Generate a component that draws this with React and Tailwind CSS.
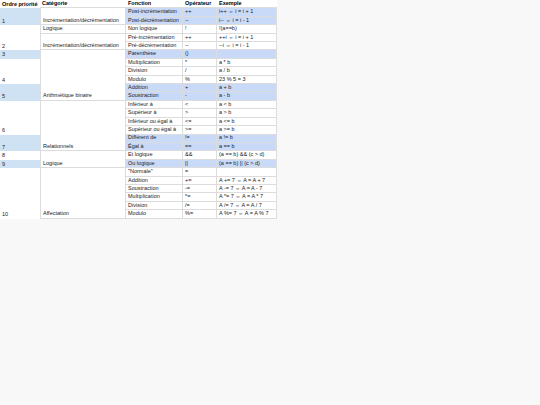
import React from "react";

// one entry per body row: [fonction, operateur, exemple, highlighted]
const rows = [
    ["Post-incrémentation", "++", "i++ ⇔ i = i + 1", true],
    ["Post-décrémentation", "--", "i-- ⇔ i = i - 1", true],
    ["Non logique", "!", "!(a==b)", false],
    ["Pré-incrémentation", "++", "++i ⇔ i = i + 1", false],
    ["Pré-décrémentation", "--", "--i ⇔ i = i - 1", false],
    ["Parenthèse", "()", "", true],
    ["Multiplication", "*", "a * b", false],
    ["Division", "/", "a / b", false],
    ["Modulo", "%", "23 % 5 = 3", false],
    ["Addition", "+", "a + b", true],
    ["Soustraction", "-", "a - b", true],
    ["Inférieur à", "<", "a < b", false],
    ["Supérieur à", ">", "a > b", false],
    ["Inférieur ou égal à", "<=", "a <= b", false],
    ["Supérieur ou égal à", ">=", "a >= b", false],
    ["Différent de", "!=", "a != b", true],
    ["Égal à", "==", "a == b", true],
    ["Et logique", "&&", "(a == b) && (c > d)", false],
    ["Ou logique", "||", "(a == b) || (c > d)", true],
    ['"Normale"', "=", "", false],
    ["Addition", "+=", "A += 7 ⇔ A = A + 7", false],
    ["Soustraction", "-=", "A -= 7 ⇔ A = A - 7", false],
    ["Multiplication", "*=", "A *= 7 ⇔ A = A * 7", false],
    ["Division", "/=", "A /= 7 ⇔ A = A / 7", false],
    ["Modulo", "%=", "A %= 7 ⇔ A = A % 7", false],
];

// row index -> [label, span, blue]
const priorities = {
    0: ["1", "row-span-2", true],
    2: ["2", "row-span-3", false],
    5: ["3", "row-span-1", true],
    6: ["4", "row-span-3", false],
    9: ["5", "row-span-2", true],
    11: ["6", "row-span-4", false],
    15: ["7", "row-span-2", true],
    17: ["8", "row-span-1", false],
    18: ["9", "row-span-1", true],
    19: ["10", "row-span-6", false],
};

const categories = {
    0: ["Incrémentation/décrémentation", "row-span-2"],
    2: ["Logique", "row-span-1"],
    3: ["Incrémentation/décrémentation", "row-span-2"],
    5: ["Arithmétique binaire", "row-span-6"],
    11: ["Relationnels", "row-span-6"],
    17: ["Logique", "row-span-2"],
    19: ["Affectation", "row-span-6"],
};

const cell = "flex items-end px-[2px] whitespace-nowrap overflow-hidden";
const line = "border-[#dcdcdc]";

const App = () => {
    return (
        <div className="min-h-[405px] w-full bg-[#f7f8f7]" style={{ fontFamily: '"Liberation Sans", Arial, sans-serif' }}>
            <div className="grid grid-cols-[40px_86px_57px_34px_60px] grid-rows-[repeat(26,8.42px)] w-[277px] bg-white text-[5.5px] leading-[8.42px] text-[#222]">
                <div className={`${cell} font-bold text-black`}>Ordre priorité</div>
                <div className={`${cell} font-bold text-black border-b ${line}`}>Catégorie</div>
                <div className={`${cell} font-bold text-black border-b ${line}`}>Fonction</div>
                <div className={`${cell} font-bold text-black border-b ${line}`}>Opérateur</div>
                <div className={`${cell} font-bold text-black border-b ${line}`}>Exemple</div>

                {rows.map((row, i) => {
                    const prio = priorities[i];
                    const cat = categories[i];
                    const bg = row[3] ? "bg-[#c9daf8]" : "bg-white";
                    return (
                        <React.Fragment key={i}>
                            {prio && (
                                <div className={`${cell} ${prio[1]} ${prio[2] ? "bg-[#cfe2f3]" : "bg-white"}`}>
                                    {prio[0]}
                                </div>
                            )}
                            {cat && (
                                <div className={`${cell} ${cat[1]} border-l border-r border-b ${line}`}>
                                    {cat[0]}
                                </div>
                            )}
                            <div className={`${cell} ${bg} border-r border-b ${line}`}>{row[0]}</div>
                            <div className={`${cell} ${bg} border-r border-b ${line}`}>{row[1]}</div>
                            <div className={`${cell} ${bg} border-r border-b ${line}`}>{row[2]}</div>
                        </React.Fragment>
                    );
                })}
            </div>
        </div>
    );
};

export default App;
